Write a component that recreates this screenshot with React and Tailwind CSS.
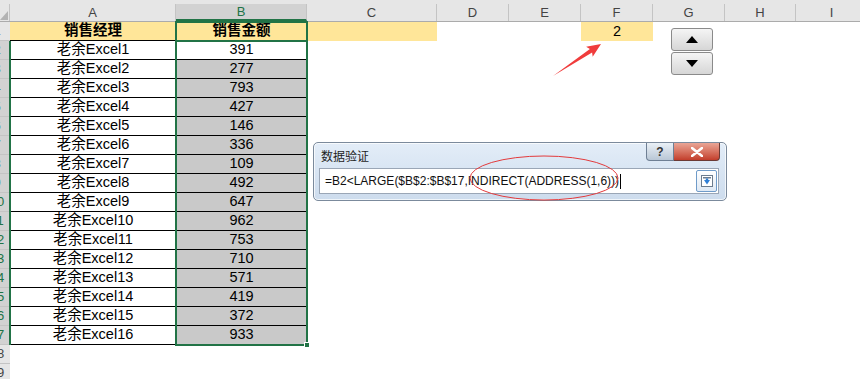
import React from 'react';

const cols = [
  { l: 'A', w: 'w-[166px]' },
  { l: 'B', w: 'w-[131px]' },
  { l: 'C', w: 'w-[130px]' },
  { l: 'D', w: 'w-[72px]' },
  { l: 'E', w: 'w-[72px]' },
  { l: 'F', w: 'w-[72px]' },
  { l: 'G', w: 'w-[72px]' },
  { l: 'H', w: 'w-[71px]' },
  { l: 'I', w: 'w-[72px]' },
  { l: '', w: 'w-[40px]' },
];

const amounts = [391, 277, 793, 427, 146, 336, 109, 492, 647, 962, 753, 710, 571, 419, 372, 933];

function RowHead({ n, selected }) {
  return (
    <div
      className={
        'w-[10px] h-full overflow-hidden border-b border-[#c4c4c4] flex-none ' +
        (selected ? 'bg-[#d2d2d2] text-[#217346]' : 'bg-[#e6e6e6] text-[#444]')
      }
    >
      <div className="w-[20px] ml-[-13px] text-center text-[13px] leading-[18px]">{n}</div>
    </div>
  );
}

export default function App() {
  return (
    <div className="relative w-[860px] h-[379px] overflow-hidden bg-white font-['Liberation_Sans','Noto_Sans_CJK_SC',sans-serif] text-black">
      {/* column headers */}
      <div className="h-[4px] bg-[#e6e6e6]" />
      <div className="flex h-[18px] bg-[#e6e6e6] border-b border-[#ababab]">
        <div className="w-[10px] flex-none border-r border-[#c4c4c4] flex items-end">
          <svg width="9" height="14" viewBox="0 0 9 14">
            <polygon points="0,13 8,4 8,13" fill="#b3b3b3" />
          </svg>
        </div>
        {cols.map((c) => (
          <div
            key={c.l}
            className={
              c.w +
              ' flex-none border-r border-[#c4c4c4] flex items-center justify-center text-[13px] ' +
              (c.l === 'B' ? 'bg-[#d2d2d2] text-[#217346] border-b-2 border-b-[#217346]' : 'text-[#444]')
            }
          >
            {c.l}
          </div>
        ))}
      </div>

      {/* row 1 */}
      <div className="flex h-[19px]">
        <RowHead n={1} />
        <div className="w-[166px] flex-none bg-[#ffe699] border-b border-black flex items-center justify-center font-bold text-[14.5px]">
          销售经理
        </div>
        <div className="w-[131px] flex-none bg-[#ffe699] border-b border-black flex items-center justify-center font-bold text-[14.5px]">
          销售金额
        </div>
        <div className="w-[130px] flex-none bg-[#ffe699]" />
        <div className="w-[144px] flex-none" />
        <div className="w-[72px] flex-none bg-[#ffe699] flex items-center justify-center text-[14.5px]">2</div>
      </div>

      {/* data rows */}
      {amounts.map((v, i) => (
        <div key={i} className="flex h-[19px]">
          <RowHead n={i + 2} selected />
          <div className="w-[166px] flex-none border-b border-black flex items-center justify-center text-[14.5px]">
            老余Excel{i + 1}
          </div>
          <div
            className={
              'w-[131px] flex-none border-b border-black flex items-center justify-center text-[14.5px] ' +
              (i === 0 ? 'bg-white' : 'bg-[#c9c9c9]')
            }
          >
            {v}
          </div>
        </div>
      ))}

      {[18, 19].map((n) => (
        <div key={n} className="flex h-[19px]">
          <RowHead n={n} />
        </div>
      ))}

      {/* row header selected edge */}
      <div className="absolute left-[9px] top-[41px] w-[2px] h-[304px] bg-[#217346]" />

      {/* selection border */}
      <div className="absolute left-[175px] top-[21px] w-[133px] h-[325px] border-2 border-[#217346]" />
      <div className="absolute left-[175px] top-[40px] w-[133px] h-[2px] bg-[#217346]" />
      <div className="absolute left-[304px] top-[342px] w-[6px] h-[6px] bg-[#217346] border border-white" />

      {/* spin button */}
      <div className="absolute left-[671px] top-[28px] flex flex-col gap-[1px]">
        <div className="w-[42px] h-[23px] rounded-[3px] border border-[#8a8a8a] bg-linear-to-b from-[#f5f5f5] to-[#d6d6d6] flex items-center justify-center">
          <svg width="12" height="7" viewBox="0 0 12 7">
            <polygon points="0,7 6,0 12,7" fill="#000" />
          </svg>
        </div>
        <div className="w-[42px] h-[23px] rounded-[3px] border border-[#8a8a8a] bg-linear-to-b from-[#f5f5f5] to-[#d6d6d6] flex items-center justify-center">
          <svg width="12" height="7" viewBox="0 0 12 7">
            <polygon points="0,0 12,0 6,7" fill="#000" />
          </svg>
        </div>
      </div>

      {/* data validation dialog */}
      <div className="absolute left-[313px] top-[142px] w-[414px] h-[59px] rounded-[5px] border border-[#7b8a9c] bg-linear-to-b from-[#e3edf8] to-[#cddced] shadow-[inset_0_0_0_1px_rgba(255,255,255,0.7)]">
        <div className="flex items-start h-[24px]">
          <div className="pl-[7px] pt-[6px] text-[12px] leading-[14px] font-['Noto_Sans_CJK_SC',sans-serif] text-[#1e1e1e]">
            数据验证
          </div>
          <div className="ml-auto mr-[6px] flex">
            <div className="w-[28px] h-[18px] rounded-bl-[4px] border border-t-0 border-[#6e7f94] bg-linear-to-b from-[#eaf0f6] to-[#b9c7d6] flex items-center justify-center text-[12px] font-bold text-[#333]">
              ?
            </div>
            <div className="w-[46px] h-[18px] rounded-br-[4px] border border-t-0 border-l-0 border-[#6b3a35] bg-linear-to-b from-[#e9a596] to-[#c23d2b] flex items-center justify-center">
              <svg width="12" height="10" viewBox="0 0 12 10">
                <path d="M1 1 L11 9 M11 1 L1 9" stroke="#fff" strokeWidth="2.6" strokeLinecap="round" />
              </svg>
            </div>
          </div>
        </div>
        <div className="ml-[5px] mt-[1px] w-[400px] h-[26px] bg-white border border-[#9aa6b6] flex items-center pl-[5px]">
          <span className="text-[12px] leading-[14px] text-[#111]">=B2&lt;LARGE($B$2:$B$17,INDIRECT(ADDRESS(1,6)))</span>
          <span className="ml-[1px] w-[1px] h-[15px] bg-black" />
          <div className="ml-auto mr-[1px] w-[21px] h-[22px] rounded-[2px] border border-[#6f9bc9] bg-linear-to-b from-[#ffffff] to-[#dfe9f4] flex items-center justify-center">
            <svg width="12" height="12" viewBox="0 0 12 12">
              <rect x="0.5" y="0.5" width="11" height="11" fill="#fff" stroke="#6c7c8e" />
              <rect x="2" y="2" width="8" height="1.5" fill="#6c7c8e" />
              <polygon points="3,5 9,5 6,9.5" fill="#2f7fd6" />
              <rect x="4.8" y="3.5" width="2.4" height="2" fill="#2f7fd6" />
            </svg>
          </div>
        </div>
      </div>

      {/* annotations */}
      <svg className="absolute left-0 top-0 pointer-events-none" width="860" height="379">
        <ellipse cx="544" cy="178" rx="74" ry="22" fill="none" stroke="#e33b3d" strokeWidth="1" />
        <polygon
          points="553,76 589.9,49 586.1,46.8 601,44 592.7,56.8 592.1,52.4"
          fill="#f03c3c"
        />
      </svg>
    </div>
  );
}
